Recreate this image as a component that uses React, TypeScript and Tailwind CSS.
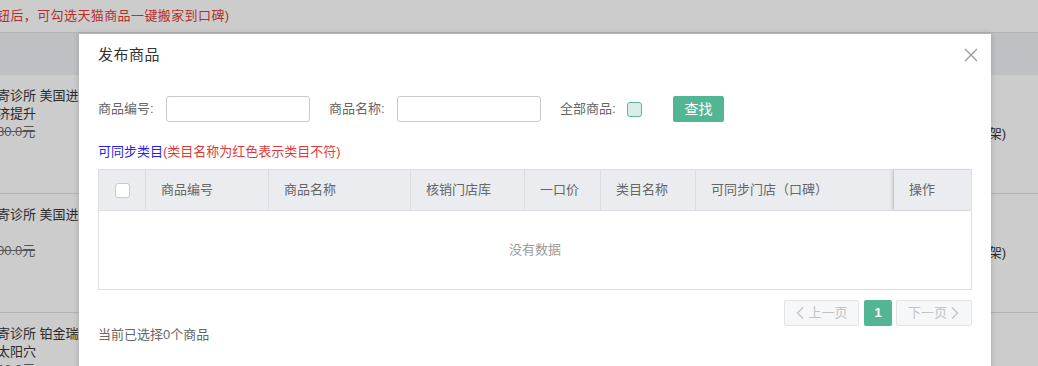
import React from 'react';

const font = { fontFamily: '"Liberation Sans", "Noto Sans CJK SC", sans-serif' };

const columns = [
  { label: '商品编号', w: 'w-[123px]' },
  { label: '商品名称', w: 'w-[142px]' },
  { label: '核销门店库', w: 'w-[114px]' },
  { label: '一口价', w: 'w-[76px]' },
  { label: '类目名称', w: 'w-[95px]' },
  { label: '可同步门店（口碑）', w: 'w-[198px]' },
];

const bgRows = [
  { lines: ['寄诊所 美国进口', '济提升'], price: '80.0元' },
  { lines: ['寄诊所 美国进口', ''], price: '00.0元' },
  { lines: ['寄诊所 铂金瑞蓝', '太阳穴'], price: '80.0元' },
];

const ChevronLeft = () => (
  <svg width="10" height="14" viewBox="0 0 10 14" fill="none" stroke="currentColor" strokeWidth="1.4">
    <path d="M8 1.5L2.5 7L8 12.5" />
  </svg>
);

const ChevronRight = () => (
  <svg width="10" height="14" viewBox="0 0 10 14" fill="none" stroke="currentColor" strokeWidth="1.4">
    <path d="M2 1.5L7.5 7L2 12.5" />
  </svg>
);

export default function App() {
  return (
    <div className="relative w-[1038px] h-[366px] overflow-hidden bg-[#cccccc] text-[13px]" style={font}>
      {/* page behind the overlay */}
      <div className="h-[32px] flex items-center text-[#b3302c] whitespace-nowrap">
        <span className="ml-[-3px] tracking-[0.4px]">钮后，可勾选天猫商品一键搬家到口碑)</span>
      </div>
      <div className="h-px bg-[#b4b4b6]" />
      <div className="h-[42px] bg-[#bfc0c3]" />
      {bgRows.map((row, i) => (
        <div key={i} className="h-[119px] flex justify-between border-b border-[#b3b3b3] leading-[18px]">
          <div className="pt-[12px] ml-[-3px] text-[#2b2b2b] whitespace-nowrap">
            {row.lines.map((l, j) => (
              <div key={j} className="h-[18px]">{l}</div>
            ))}
            <div className="text-[#555] line-through">{row.price}</div>
          </div>
          {i < 2 && <div className="self-center mr-[32px] text-[#2b2b2b]">(已下架)</div>}
        </div>
      ))}

      {/* modal */}
      <div className="absolute left-[79px] top-[34px] w-[912px] h-[360px] bg-white shadow-[0_0_6px_rgba(0,0,0,0.18)] px-[19px] text-[#666]">
        <div className="h-[42px] flex items-center justify-between">
          <span className="text-[15px] text-[#333] tracking-[0.5px]">发布商品</span>
          <button className="mr-[-6px] text-[#9a9a9a]">
            <svg width="14" height="14" viewBox="0 0 14 14" stroke="currentColor" strokeWidth="1.3">
              <path d="M1 1L13 13M13 1L1 13" />
            </svg>
          </button>
        </div>

        <div className="mt-[20px] h-[26px] flex items-center whitespace-nowrap">
          <span className="w-[68px]">商品编号:</span>
          <input className="w-[144px] h-[26px] border border-[#c9c9cc] rounded-[3px] outline-none" />
          <span className="ml-[19px] w-[68px]">商品名称:</span>
          <input className="w-[144px] h-[26px] border border-[#c9c9cc] rounded-[3px] outline-none" />
          <span className="ml-[19px] w-[67px]">全部商品:</span>
          <span className="w-[15px] h-[15px] rounded-[3px] border border-[#5cb89d] bg-[#d9ece7]" />
          <button className="ml-[31px] w-[51px] h-[26px] rounded-[2px] bg-[#52b695] text-white text-[14px]">查找</button>
        </div>

        <div className="mt-[21px] leading-[18px]">
          <span className="text-[#2323ee]">可同步类目</span>
          <span className="text-[#e23a3a]">(类目名称为红色表示类目不符)</span>
        </div>

        <div className="mt-[8px] border border-[#dedfe2]">
          <div className="h-[41px] flex bg-[#ebecf0] border-b border-[#dedfe2]">
            <div className="w-[47px] flex items-center justify-center border-r border-[#dcdde0]">
              <span className="w-[15px] h-[15px] rounded-[3px] border border-[#c7c8cc] bg-white" />
            </div>
            {columns.map((c) => (
              <div key={c.label} className={`${c.w} flex items-center pl-[15px] border-r border-[#dcdde0] whitespace-nowrap`}>
                {c.label}
              </div>
            ))}
            <div className="flex-1 flex items-center pl-[15px] shadow-[-2px_0_3px_rgba(0,0,0,0.12)]">操作</div>
          </div>
          <div className="h-[78px] flex items-center justify-center text-[#9a9a9a]">没有数据</div>
        </div>

        <div className="mt-[10px] h-[26px] flex justify-end items-center gap-[4px] text-[13px]">
          <button className="w-[75px] h-[26px] flex items-center justify-center gap-[3px] rounded-[2px] border border-[#e3e4e7] bg-[#f6f7f9] text-[#c4c4c4]">
            <ChevronLeft />
            上一页
          </button>
          <button className="ml-[1px] w-[28px] h-[26px] rounded-[2px] bg-[#52b695] text-white font-bold">1</button>
          <button className="w-[76px] h-[26px] flex items-center justify-center gap-[3px] rounded-[2px] border border-[#e3e4e7] bg-[#f6f7f9] text-[#c4c4c4]">
            下一页
            <ChevronRight />
          </button>
        </div>

        <div className="leading-[18px]">当前已选择0个商品</div>
      </div>
    </div>
  );
}
